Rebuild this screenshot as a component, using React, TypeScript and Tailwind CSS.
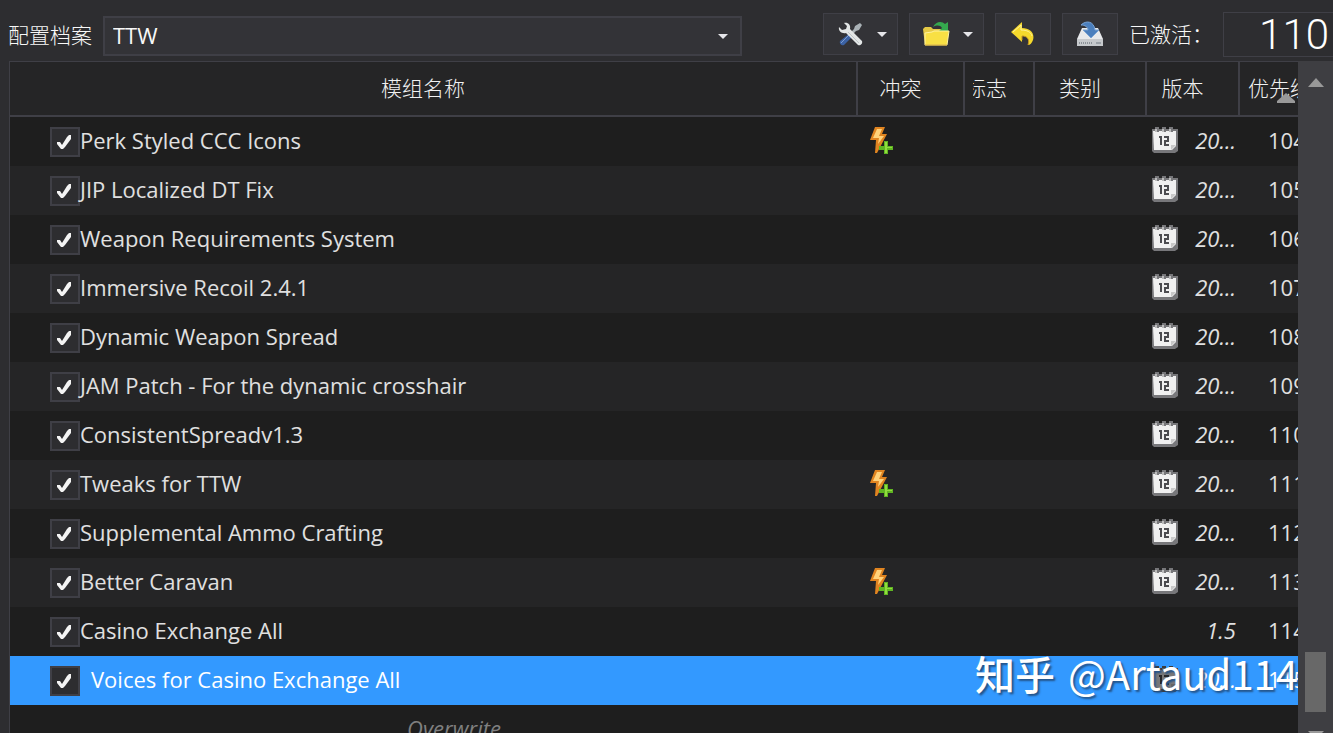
import type { ReactNode } from "react";

interface Mod {
  name: string;
  priority: string;
  version: string;
  dated?: boolean;
  conflict?: boolean;
  selected?: boolean;
}

const mods: Mod[] = [
  { name: "Perk Styled CCC Icons", priority: "104", version: "20...", dated: true, conflict: true },
  { name: "JIP Localized DT Fix", priority: "105", version: "20...", dated: true },
  { name: "Weapon Requirements System", priority: "106", version: "20...", dated: true },
  { name: "Immersive Recoil 2.4.1", priority: "107", version: "20...", dated: true },
  { name: "Dynamic Weapon Spread", priority: "108", version: "20...", dated: true },
  { name: "JAM Patch - For the dynamic crosshair", priority: "109", version: "20...", dated: true },
  { name: "ConsistentSpreadv1.3", priority: "110", version: "20...", dated: true },
  { name: "Tweaks for TTW", priority: "111", version: "20...", dated: true, conflict: true },
  { name: "Supplemental Ammo Crafting", priority: "112", version: "20...", dated: true },
  { name: "Better Caravan", priority: "113", version: "20...", dated: true, conflict: true },
  { name: "Casino Exchange All", priority: "114", version: "1.5" },
  { name: "Voices for Casino Exchange All", priority: "115", version: "20...", dated: true, selected: true },
];

const CaretDown = () => (
  <svg className="h-2 w-3 shrink-0" viewBox="0 0 12 8" fill="#e6e6ea">
    <path d="M1 2h10L6 7z" />
  </svg>
);

const ToolsIcon = () => (
  <svg className="size-7" viewBox="0 0 28 28" fill="none">
    <path d="M24 3l2 2-3 5-3 1-3 3-2-2 3-3 1-3z" fill="#a9b1b5" />
    <path d="M14 13l3 3-9 9c-2 1-5-1-4-4z" fill="#3b62a4" />
    <path d="M13 15L5 23" stroke="#7f9dce" strokeWidth="1" />
    <path d="M8 3c4-1 7 2 6 6l12 12c1 3-2 5-4 4L10 13c-4 1-8-2-7-6l3 3 4-1 1-3z" fill="#e3e6e6" />
    <path d="M12 12l11 11" stroke="#bfc5c7" strokeWidth="1" />
  </svg>
);

const FolderIcon = () => (
  <svg className="size-7" viewBox="0 0 28 28" fill="none">
    <path d="M1 9l2-2h6l2 2h14v16H3z" fill="#e5ca46" />
    <path d="M11 7c3-6 9-6 12-3l3-2v9h-9l3-3c-2-3-5-3-9-1z" fill="#35a84e" />
    <path d="M3 13l7-1 2-1h15l-2 14H3z" fill="#f8e044" stroke="#fff2a0" />
    <path d="M3 25h22" stroke="#d4a726" />
  </svg>
);

const UndoIcon = () => (
  <svg className="size-7" viewBox="0 0 28 28" fill="none">
    <path d="M2 12L13 2v6c8 0 13 5 11 12-1 3-3 5-5 5 2-6-1-9-6-9v6z" fill="#f5d92c" />
    <path d="M4 12l8-7v5c6 0 10 2 11 6" stroke="#fff29a" />
    <path d="M13 20v-4c5 0 8 3 6 9" stroke="#c4951f" />
  </svg>
);

const InstallIcon = () => (
  <svg className="size-7" viewBox="0 0 28 28" fill="none">
    <path d="M6 8h16l5 11H1z" fill="#e7e9eb" />
    <path d="M1 19h26v7H1z" fill="#c6c9cc" />
    <path d="M3 23h14" stroke="#8c9298" strokeWidth="2" strokeDasharray="1 1" />
    <path d="M20 23h5" stroke="#9ba1a7" strokeWidth="2" />
    <path d="M5 5c5-5 13-4 14 5h4l-8 8-8-8h5c0-3-3-5-7-5z" fill="#4b7fbd" stroke="#78a2d2" />
  </svg>
);

const ConflictIcon = () => (
  <svg className="h-7 w-6" viewBox="0 0 24 28">
    <path d="M5 1h10l-3 7h5L7 27H5l1-13H0z" fill="#e08420" />
    <path d="M7 3h5l-3 7h5L8 18l1-6H3z" fill="#ffd27a" />
    <path d="M14 15h4v5h5v4h-5v4h-4v-4H9v-4h5z" fill="#5fb522" />
    <path d="M15 16h2v5h5v1h-5v5h-2z" fill="#92dd3e" />
  </svg>
);

const CalendarIcon = ({ dim }: { dim?: boolean }) => (
  <svg className={`h-7 w-7 ${dim ? "brightness-50" : ""}`} viewBox="0 0 28 28">
    <path d="M1 3h26v22l-3 2H3l-2-2z" fill="#77777a" />
    <path d="M2 5h23v15l-4 4H3z" fill="#f0f0f0" />
    <path d="M25 19l-5 5v-5z" fill="#c8c8c8" />
    <path d="M4 1h4v5H4zM11 1h4v5h-4zM18 1h4v5h-4z" fill="#77777a" />
    <path d="M4 3h2v3H4zM11 3h2v3h-2zM18 3h2v3h-2z" fill="#bcbcbc" />
    <path d="M8 11h2v8M13 11h4v4h-3v4h4" fill="none" stroke="#4c4c50" strokeWidth="2" />
  </svg>
);

const ToolButton = ({ label, menu, children }: { label: string; menu?: boolean; children: ReactNode }) => (
  <button
    type="button"
    aria-label={label}
    className={`flex h-[42px] items-center border border-[#3f3f46] bg-[#333337] ${menu ? "w-[75px] justify-between pr-[9px] pl-3" : "w-14 justify-center"}`}
  >
    {children}
    {menu && <CaretDown />}
  </button>
);

const Th = ({ children, className = "" }: { children?: ReactNode; className?: string }) => (
  <th className={`border-b-2 border-[#3f3f46] pb-1 text-center font-light whitespace-nowrap ${className}`}>{children}</th>
);

const ModRow = ({ mod }: { mod: Mod }) => (
  <tr className={`h-[49px] ${mod.selected ? "bg-[#3399ff] text-white" : "odd:bg-[#1e1e1e] even:bg-[#252526]"}`}>
    <td className="pb-1 pl-10">
      <label className="flex items-center">
        <span className="mt-1 grid size-[30px] shrink-0 place-items-center">
          <input
            type="checkbox"
            defaultChecked
            className="peer col-start-1 row-start-1 size-[30px] appearance-none border-2 border-[#3f3f46] bg-[#2d2d30]"
          />
          <svg className="pointer-events-none col-start-1 row-start-1 hidden size-4 peer-checked:block" viewBox="0 0 16 16" fill="#f4f4f4">
            <path d="M0 8h3l2 3 5-8 2-2h2v4L8 13l-2 2H4l-4-5z" />
          </svg>
        </span>
        <span className={`whitespace-nowrap ${mod.selected ? "pl-[11px]" : ""}`}>{mod.name}</span>
      </label>
    </td>
    <td className="pb-1 pl-3">{mod.conflict && <ConflictIcon />}</td>
    <td />
    <td />
    <td className="pr-1 pb-1 pl-1">
      <div className="flex items-center justify-between">
        {mod.dated ? <CalendarIcon dim={mod.selected} /> : <span />}
        <span className="italic">{mod.version}</span>
      </div>
    </td>
    <td className="overflow-hidden pb-1 pl-7 whitespace-nowrap">{mod.priority}</td>
  </tr>
);

export default function App() {
  return (
    <div className="flex h-screen flex-col overflow-hidden bg-[#2d2d30] font-['Open_Sans','Noto_Sans_CJK_SC',sans-serif] text-[21px] leading-7 text-[#e0e0e0]">
      <header className="flex shrink-0 items-start pt-3 pb-1 pl-2 text-[#f8f8f8]">
        <label htmlFor="profile" className="mt-2 mr-[11px] font-['Noto_Sans_CJK_SC',sans-serif] font-light whitespace-nowrap">
          配置档案
        </label>
        <div className="mt-1 grid min-w-0 flex-1 items-center">
          <select
            id="profile"
            className="col-start-1 row-start-1 h-10 w-full appearance-none border-2 border-[#3f3f46] bg-[#333337] px-2 pb-0.5 text-[22px] outline-none"
          >
            <option>TTW</option>
          </select>
          <span className="pointer-events-none col-start-1 row-start-1 mr-[13px] justify-self-end">
            <CaretDown />
          </span>
        </div>
        <div className="mt-px ml-[81px] flex items-center gap-[11px]">
          <ToolButton label="工具" menu>
            <ToolsIcon />
          </ToolButton>
          <ToolButton label="打开文件夹" menu>
            <FolderIcon />
          </ToolButton>
          <ToolButton label="还原备份">
            <UndoIcon />
          </ToolButton>
          <ToolButton label="创建备份">
            <InstallIcon />
          </ToolButton>
          <label htmlFor="active-count" className="w-[84px] pb-0.5 font-['Noto_Sans_CJK_SC',sans-serif] font-light whitespace-nowrap">
            已激活：
          </label>
        </div>
        <output
          id="active-count"
          className="ml-2.5 flex h-[45px] w-[110px] shrink-0 items-center justify-end border border-r-0 border-[#3f3f46] pr-1 font-['Roboto',sans-serif] text-[42px] leading-10 font-light text-white"
        >
          110
        </output>
      </header>

      <main className="flex min-h-0 flex-1 pl-[9px]">
        <div className="relative min-w-0 flex-1 overflow-hidden border-t border-l border-[#3f3f46] bg-[#1e1e1e]">
          <table className="w-full table-fixed border-separate border-spacing-0 text-[22px]">
            <colgroup>
              <col />
              <col className="w-[107px]" />
              <col className="w-[70px]" />
              <col className="w-[112px]" />
              <col className="w-[93px]" />
              <col className="w-[58px]" />
            </colgroup>
            <thead className="bg-[#252526] font-['Noto_Sans_CJK_SC',sans-serif] text-[21px] text-[#f1f1f1]">
              <tr className="h-[55px]">
                <Th className="border-r-2 pr-5">模组名称</Th>
                <Th className="border-r-2 pr-5">冲突</Th>
                <Th className="border-r-2 pl-2">
                  <span className="flex w-[34px] justify-end overflow-hidden">标志</span>
                </Th>
                <Th className="border-r-2 pr-5">类别</Th>
                <Th className="border-r-2 pr-5">版本</Th>
                <Th className="relative overflow-hidden pl-2">
                  <span className="block text-left">优先级</span>
                  <svg className="absolute right-[3px] bottom-3 h-2.5 w-[18px]" viewBox="0 0 18 10" fill="#999999">
                    <path d="M9 0l9 8v2H0V8z" />
                  </svg>
                </Th>
              </tr>
            </thead>
            <tbody>
              {mods.map((mod) => (
                <ModRow key={mod.priority} mod={mod} />
              ))}
              <tr className="h-[49px]">
                <td className="pb-1 pl-10 text-center text-[#808080] italic">Overwrite</td>
                <td colSpan={5} />
              </tr>
            </tbody>
          </table>
          <div className="pointer-events-none absolute right-0 bottom-[30px] font-['Noto_Sans_CJK_SC',sans-serif] text-[40px] leading-[60px] whitespace-nowrap text-white [text-shadow:2px_2px_2px_#24548a]">
            <span className="mr-1 font-medium">知乎</span> @Artaud114
          </div>
        </div>

        {/* scrollbar */}
        <div className="flex w-[35px] shrink-0 flex-col items-center bg-[#3e3e42] pt-[17px]">
          <svg className="h-[9px] w-4" viewBox="0 0 16 9" fill="#999999">
            <path d="M8 0l8 9H0z" />
          </svg>
          <div className="mt-auto h-[60px] w-[21px] bg-[#686868]" />
          <svg className="mt-[19px] h-0.5 w-4" viewBox="0 0 16 2" fill="#999999">
            <path d="M0 0h16l-2 2H2z" />
          </svg>
        </div>
      </main>
    </div>
  );
}
